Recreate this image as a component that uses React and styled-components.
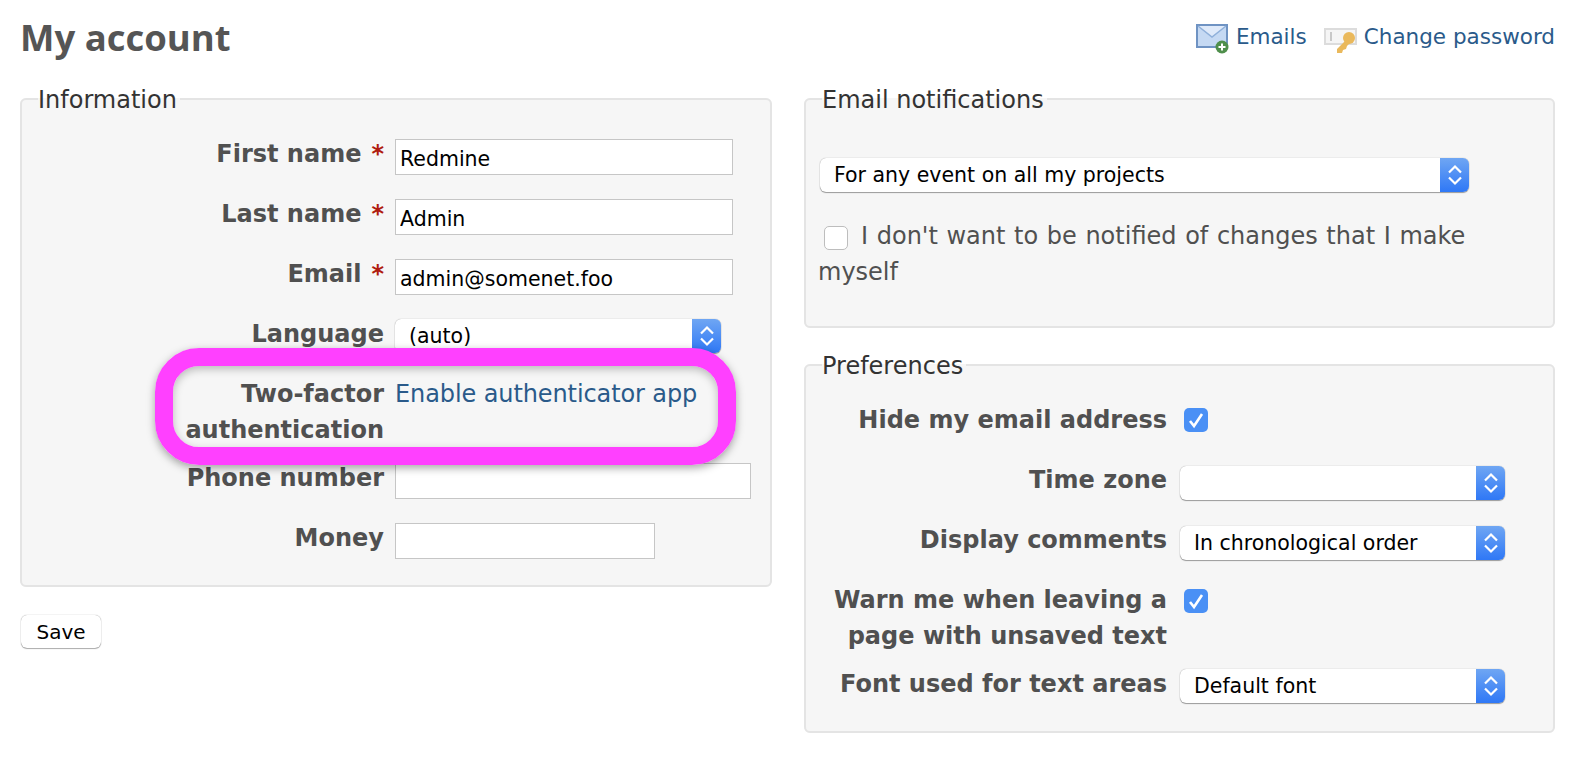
import React from "react";
import styled, { createGlobalStyle } from "styled-components";

const Global = createGlobalStyle`
  html, body { margin: 0; padding: 0; background: #fff; }
  body { font-family: "DejaVu Sans", Verdana, sans-serif; color: #484848; }
`;

const Page = styled.div`
  position: relative;
  width: 1570px;
  height: 760px;
  overflow: hidden;
  box-sizing: border-box;
  padding: 0 15px 0 20px;
`;

const Header = styled.div`
  display: flex;
  justify-content: space-between;
  align-items: flex-start;
  height: 84px;
`;

const Title = styled.h2`
  margin: 12px 0 0;
  font-family: "Open Sans", "Liberation Sans", sans-serif;
  font-size: 36.5px;
  line-height: 50px;
  font-weight: 700;
  color: #555;
`;

const Contextual = styled.div`
  display: flex;
  gap: 17px;
  margin-top: 22px;
`;

const IconLink = styled.a`
  display: flex;
  align-items: center;
  gap: 7px;
  font-size: 21.5px;
  line-height: 28px;
  color: #2a5a8a;

  svg {
    transform: translateY(2px);
  }
`;

const Columns = styled.div`
  display: grid;
  grid-template-columns: 752px 751px;
  column-gap: 32px;
  align-items: start;
`;

const Column = styled.div`
  display: flex;
  flex-direction: column;
`;

const Box = styled.fieldset`
  margin: 0;
  min-width: 0;
  box-sizing: border-box;
  height: ${(p) => p.$height}px;
  margin-bottom: ${(p) => p.$gap || 0}px;
  padding: 0 18px;
  background: #f6f6f6;
  border: 2px solid #e4e4e4;
  border-radius: 6px;
`;

const Legend = styled.legend`
  padding: 2px 3px 0 0;
  margin-left: -2px;
  font-size: 24px;
  line-height: 28px;
  color: #333;
`;

const Row = styled.div`
  display: grid;
  grid-template-columns: ${(p) => p.$label || 344}px 1fr;
  column-gap: ${(p) => p.$gap || 11}px;
  margin-top: ${(p) => p.$top || 0}px;
`;

const Label = styled.label`
  margin-top: ${(p) => (p.$high ? -4 : -3)}px;
  text-align: right;
  font-size: 24px;
  line-height: 36px;
  font-weight: 700;
  color: #505050;
`;

const Star = styled.span`
  color: #b01c10;
  margin-left: 10px;
`;

const TextInput = styled.input`
  display: block;
  box-sizing: border-box;
  width: ${(p) => p.$width}px;
  height: 36px;
  padding: 5px 4px 1px;
  background: #fff;
  border: 1px solid #c6c6c6;
  border-radius: 0;
  font-family: "DejaVu Sans", Verdana, sans-serif;
  font-size: 20.5px;
  color: #000;
  outline: none;
`;

const Select = styled.div`
  display: flex;
  box-sizing: border-box;
  width: ${(p) => p.$width}px;
  height: 34px;
  background: #fff;
  border-radius: 6px;
  box-shadow: 0 0 1px rgba(0, 0, 0, 0.4), 0 1px 1px rgba(0, 0, 0, 0.35);
  overflow: hidden;
  font-size: 20.5px;
  line-height: 34px;
  color: #000;
`;

const SelectText = styled.span`
  flex: 1;
  padding-left: 14px;
  white-space: nowrap;
`;

const SelectArrows = styled.span`
  display: flex;
  align-items: center;
  justify-content: center;
  width: 29px;
  background: linear-gradient(#6fa6f3, #2f78f6);
`;

const Link = styled.a`
  margin-top: -3px;
  font-size: 24px;
  line-height: 36px;
  letter-spacing: -0.1px;
  color: #2a5a8a;
`;

const Check = styled.span`
  display: flex;
  align-items: center;
  justify-content: center;
  box-sizing: border-box;
  width: 24px;
  height: 24px;
  margin-top: ${(p) => p.$top || 0}px;
  margin-left: ${(p) => p.$left || 0}px;
  border-radius: 5px;
  background: ${(p) => (p.$on ? "#4a90f5" : "#fff")};
  border: ${(p) => (p.$on ? "none" : "1px solid #bdbdbd")};
`;

const NotifySelect = styled.div`
  margin: 44px 0 0 -4px;
`;

const NotifyText = styled.div`
  margin: 26px 0 0 -6px;
  font-size: 24px;
  line-height: 36px;
  word-spacing: 1px;
  color: #505050;
`;

const NotifyCheck = styled(Check)`
  display: inline-flex;
  vertical-align: -6px;
  margin: 0 13px 0 6px;
`;

const SaveButton = styled.button`
  display: block;
  width: 80px;
  height: 33px;
  margin: 28px 0 0 1px;
  padding: 0;
  background: #fff;
  border: none;
  border-radius: 6px;
  box-shadow: 0 0 1px rgba(0, 0, 0, 0.45), 0 1px 1px rgba(0, 0, 0, 0.3);
  font-family: "DejaVu Sans", Verdana, sans-serif;
  font-size: 20px;
  color: #000;
`;

const Highlight = styled.div`
  position: absolute;
  left: 155px;
  top: 348px;
  width: 581px;
  height: 117px;
  box-sizing: border-box;
  border: 18px solid #ff40ff;
  border-radius: 44px;
  box-shadow: 0 3px 8px rgba(0, 0, 0, 0.35), inset 0 3px 8px rgba(0, 0, 0, 0.25);
`;

const Arrows = () => (
  <svg width="18" height="24" viewBox="0 0 18 24" fill="none" stroke="#fff" strokeWidth="2.2">
    <path d="M3 9.5 9 3.5l6 6M3 14.5l6 6 6-6" />
  </svg>
);

const Tick = () => (
  <svg width="18" height="18" viewBox="0 0 18 18" fill="none" stroke="#fff" strokeWidth="2.6">
    <path d="M3 10l4 5 8-12" />
  </svg>
);

const MailIcon = () => (
  <svg width="33" height="30" viewBox="0 0 33 30">
    <rect x="1" y="1" width="30" height="22" fill="#c5d9f3" stroke="#6f93c3" strokeWidth="2" />
    <path d="M2 2l14 11L30 2" fill="#dfeafa" stroke="#8fb0da" strokeWidth="1.5" />
    <circle cx="26" cy="23" r="6.5" fill="#4f8f4c" />
    <path d="M26 19.5v7M22.5 23h7" stroke="#fff" strokeWidth="2" />
  </svg>
);

const KeyIcon = () => (
  <svg width="33" height="30" viewBox="0 0 33 30">
    <rect x="1" y="5" width="31" height="15" fill="#f5f5f5" stroke="#dcdcdc" strokeWidth="2" />
    <rect x="6" y="8" width="2" height="9" fill="#c8c8c8" />
    <circle cx="25" cy="14" r="6" fill="#eab95c" />
    <path d="M22 16L13 25v4h5l1-3 3-1 1-3 4-4z" fill="#eab95c" />
  </svg>
);

const SelectBox = ({ width, children }) => (
  <Select $width={width}>
    <SelectText>{children}</SelectText>
    <SelectArrows>
      <Arrows />
    </SelectArrows>
  </Select>
);

export default function App() {
  return (
    <Page>
      <Global />
      <Header>
        <Title>My account</Title>
        <Contextual>
          <IconLink>
            <MailIcon />
            Emails
          </IconLink>
          <IconLink>
            <KeyIcon />
            Change password
          </IconLink>
        </Contextual>
      </Header>
      <Columns>
        <Column>
          <Box $height={503}>
            <Legend>Information</Legend>
            <Row $top={25}>
              <Label>First name<Star>*</Star></Label>
              <TextInput $width={338} defaultValue="Redmine" />
            </Row>
            <Row $top={24}>
              <Label>Last name<Star>*</Star></Label>
              <TextInput $width={338} defaultValue="Admin" />
            </Row>
            <Row $top={24}>
              <Label>Email<Star>*</Star></Label>
              <TextInput $width={338} defaultValue="admin@somenet.foo" />
            </Row>
            <Row $top={24}>
              <Label>Language</Label>
              <SelectBox width={326}>(auto)</SelectBox>
            </Row>
            <Row $top={26}>
              <Label>Two-factor authentication</Label>
              <Link>Enable authenticator app</Link>
            </Row>
            <Row $top={15}>
              <Label>Phone number</Label>
              <TextInput $width={356} />
            </Row>
            <Row $top={24}>
              <Label>Money</Label>
              <TextInput $width={260} />
            </Row>
          </Box>
          <SaveButton>Save</SaveButton>
        </Column>
        <Column>
          <Box $height={244} $gap={22}>
            <Legend>Email notifications</Legend>
            <NotifySelect>
              <SelectBox width={649}>For any event on all my projects</SelectBox>
            </NotifySelect>
            <NotifyText>
              <NotifyCheck />I don't want to be notified of changes that I make myself
            </NotifyText>
          </Box>
          <Box $height={383}>
            <Legend>Preferences</Legend>
            <Row $label={343} $gap={13} $top={25}>
              <Label>Hide my email address</Label>
              <Check $on $top={3} $left={4}><Tick /></Check>
            </Row>
            <Row $label={343} $gap={13} $top={28}>
              <Label $high>Time zone</Label>
              <SelectBox width={325} />
            </Row>
            <Row $label={343} $gap={13} $top={26}>
              <Label $high>Display comments</Label>
              <SelectBox width={325}>In chronological order</SelectBox>
            </Row>
            <Row $label={343} $gap={13} $top={25}>
              <Label>Warn me when leaving a page with unsaved text</Label>
              <Check $on $top={4} $left={4}><Tick /></Check>
            </Row>
            <Row $label={343} $gap={13} $top={15}>
              <Label>Font used for text areas</Label>
              <SelectBox width={325}>Default font</SelectBox>
            </Row>
          </Box>
        </Column>
      </Columns>
      <Highlight />
    </Page>
  );
}
